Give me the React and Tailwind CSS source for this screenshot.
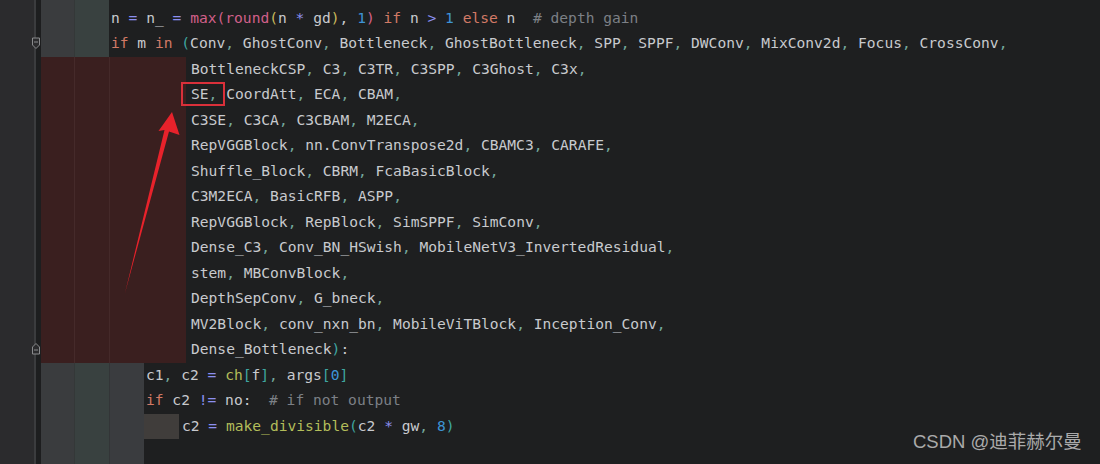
import React from "react";

const D = "text-[#c8cace]";
const KW = "text-[#d27a66]";
const OP = "text-[#8c8ff0]";
const PK = "text-[#d2608a]";
const YL = "text-[#c9b95c]";
const NUM = "text-[#3d94d6]";
const TL = "text-[#3fa6a0]";
const CM = "text-[#7c8086]";
const FN = "text-[#b3bd5a]";
const CMA = "text-[#74a89d]";

function names(s) {
  return s.split(/(,)/).filter((x) => x !== "").map((x) => (x === "," ? [CMA, ","] : [D, x]));
}

const G1 = "w-[33px] bg-[#3a3c3e]";
const G2 = "w-[35px] bg-[#394140] border-l border-[#343838]";
const G3 = "w-[35px] bg-[#3a3c3f] border-l border-[#333537]";
const G4 = "w-[35px] bg-[#403d3b]";
const R1 = "w-[33px] bg-[#3a1f1f]";
const R2 = "w-[35px] bg-[#3a1f1f] border-l border-[#452a2a]";
const R3 = "w-[35px] bg-[#3a1f1f] border-l border-[#442929]";
const R4 = "w-[42px] bg-[#3a1f1f]";

const TOP = [G1, G2];
const RED = [R1, R2, R3, R4];
const MID = [G1, G2, G3];

const lines = [
  {
    segs: TOP,
    pad: "w-[2px]",
    t: [
      [D, "n "], [OP, "="], [D, " n_ "], [OP, "="], [D, " "], [PK, "max("], [PK, "round"], [YL, "("],
      [D, "n "], [OP, "*"], [D, " gd"], [YL, ")"], [D, ", "], [NUM, "1"], [PK, ")"], [D, " "],
      [KW, "if"], [D, " n "], [OP, ">"], [D, " "], [NUM, "1"], [D, " "], [KW, "else"], [D, " n  "],
      [CM, "# depth gain"],
    ],
  },
  {
    segs: TOP,
    pad: "w-[2px]",
    t: [
      [KW, "if"], [D, " m "], [KW, "in"], [D, " "], [TL, "("],
      ...names("Conv, GhostConv, Bottleneck, GhostBottleneck, SPP, SPPF, DWConv, MixConv2d, Focus, CrossConv,"),
    ],
  },
  { segs: RED, pad: "w-[5px]", t: names("BottleneckCSP, C3, C3TR, C3SPP, C3Ghost, C3x,") },
  { segs: RED, pad: "w-[5px]", t: names("SE, CoordAtt, ECA, CBAM,") },
  { segs: RED, pad: "w-[5px]", t: names("C3SE, C3CA, C3CBAM, M2ECA,") },
  { segs: RED, pad: "w-[5px]", t: names("RepVGGBlock, nn.ConvTranspose2d, CBAMC3, CARAFE,") },
  { segs: RED, pad: "w-[5px]", t: names("Shuffle_Block, CBRM, FcaBasicBlock,") },
  { segs: RED, pad: "w-[5px]", t: names("C3M2ECA, BasicRFB, ASPP,") },
  { segs: RED, pad: "w-[5px]", t: names("RepVGGBlock, RepBlock, SimSPPF, SimConv,") },
  { segs: RED, pad: "w-[5px]", t: names("Dense_C3, Conv_BN_HSwish, MobileNetV3_InvertedResidual,") },
  { segs: RED, pad: "w-[5px]", t: names("stem, MBConvBlock,") },
  { segs: RED, pad: "w-[5px]", t: names("DepthSepConv, G_bneck,") },
  { segs: RED, pad: "w-[5px]", t: names("MV2Block, conv_nxn_bn, MobileViTBlock, Inception_Conv,") },
  { segs: RED, pad: "w-[5px]", t: [...names("Dense_Bottleneck"), [TL, ")"], [D, ":"]] },
  {
    segs: MID,
    pad: "w-[2px]",
    t: [
      [D, "c1"], [CMA, ","], [D, " c2 "], [OP, "="], [D, " "], [FN, "ch"], [TL, "["], [D, "f"], [TL, "]"],
      [CMA, ","], [D, " args"], [TL, "["], [NUM, "0"], [TL, "]"],
    ],
  },
  {
    segs: MID,
    pad: "w-[2px]",
    t: [[KW, "if"], [D, " c2 "], [OP, "!="], [D, " no:  "], [CM, "# if not output"]],
  },
  {
    segs: [G1, G2, G3, G4],
    pad: "w-[3px]",
    t: [
      [D, "c2 "], [OP, "="], [D, " "], [FN, "make_divisible"], [TL, "("], [D, "c2 "], [OP, "*"],
      [D, " gw"], [CMA, ","], [D, " "], [NUM, "8"], [TL, ")"],
    ],
  },
];

function Segs({ segs }) {
  return (
    <>
      {segs.map((s, i) => (
        <div key={i} className={"h-full shrink-0 " + s} />
      ))}
    </>
  );
}

function FoldMarker({ up }) {
  return (
    <svg width="10" height="13" viewBox="0 0 10 13">
      {up ? (
        <path d="M1.5 12 V5 L5 1.5 L8.5 5 V12 Z" fill="#2b2b2d" stroke="#8a8b8d" strokeWidth="1" />
      ) : (
        <path d="M1.5 1 V8 L5 11.5 L8.5 8 V1 Z" fill="#2b2b2d" stroke="#8a8b8d" strokeWidth="1" />
      )}
      <line x1="3" x2="7" y1={up ? 8 : 5} y2={up ? 8 : 5} stroke="#8a8b8d" strokeWidth="1" />
    </svg>
  );
}

export default function App() {
  return (
    <div
      className="relative w-[1100px] h-[464px] overflow-hidden bg-[#1e1f20] flex"
      style={{ fontFamily: "'DejaVu Sans Mono', 'Liberation Mono', monospace" }}
    >
      <div className="w-[34px] shrink-0 bg-[#2b2b2d]" />
      <div className="w-[2px] shrink-0 bg-[#3b3c3e]" />
      <div className="w-[5px] shrink-0 bg-[#1d1e1f]" />
      <div className="flex-1 flex flex-col text-[14.6px] leading-none">
        <div className="flex h-[5.5px]">
          <Segs segs={TOP} />
        </div>
        {lines.map((l, i) => (
          <div key={i} className="flex h-[25.5px] items-center">
            <Segs segs={l.segs} />
            <div className={"h-full shrink-0 " + l.pad} />
            <div className="whitespace-pre">
              {l.t.map(([c, s], j) => (
                <span key={j} className={c}>
                  {s}
                </span>
              ))}
            </div>
          </div>
        ))}
        <div className="flex flex-1">
          <Segs segs={MID} />
        </div>
      </div>

      {/* gutter fold markers */}
      <div className="absolute left-[31px] top-[37px]">
        <FoldMarker />
      </div>
      <div className="absolute left-[31px] top-[342px]">
        <FoldMarker up />
      </div>

      {/* red annotation box */}
      <div className="absolute left-[181px] top-[82px] w-[44px] h-[24px] border-2 border-[#d9303a]" />

      {/* red arrow */}
      <svg className="absolute left-0 top-0" width="1100" height="464" viewBox="0 0 1100 464">
        <polygon
          points="172,112 179.5,135 169,131.5 125,293 164.5,130 158.5,131"
          fill="#e8222b"
        />
      </svg>

      {/* watermark */}
      <div
        className="absolute left-[913px] top-[431px] text-[18.5px] leading-[22px] text-[#aaaaaa] whitespace-nowrap"
        style={{ fontFamily: "'Liberation Sans', 'Noto Sans CJK SC', sans-serif" }}
      >
        CSDN @迪菲赫尔曼
      </div>
    </div>
  );
}
